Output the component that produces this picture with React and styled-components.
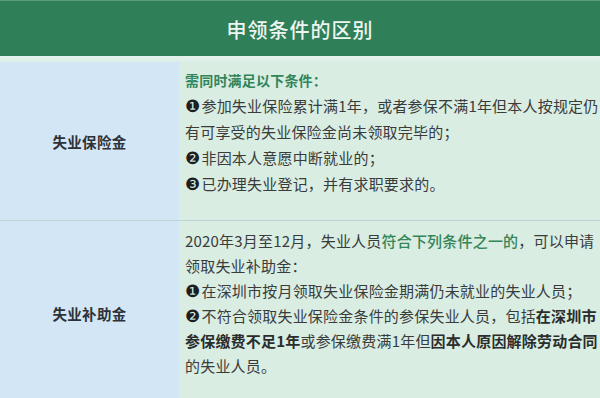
import React from "react";
import styled, { createGlobalStyle } from "styled-components";

const GlobalStyle = createGlobalStyle`
  html, body {
    margin: 0;
    padding: 0;
    background: #d9ede3;
  }
  body {
    font-family: "Noto Sans CJK SC", "Noto Sans", sans-serif;
  }
`;

const rows = [
  {
    label: "失业保险金",
    height: 158,
    pad: 5,
    lh: 26,
    lines: [
      [{ t: "需同时满足以下条件：", k: "head" }],
      [{ t: "❶", k: "num" }, { t: "参加失业保险累计满1年，或者参保不满1年但本人按规定仍" }],
      [{ t: "有可享受的失业保险金尚未领取完毕的；" }],
      [{ t: "❷", k: "num" }, { t: "非因本人意愿中断就业的；" }],
      [{ t: "❸", k: "num" }, { t: "已办理失业登记，并有求职要求的。" }],
    ],
  },
  {
    label: "失业补助金",
    height: 184,
    pad: 7,
    lh: 25,
    lines: [
      [
        { t: "2020年3月至12月，失业人员" },
        { t: "符合下列条件之一的", k: "green" },
        { t: "，可以申请" },
      ],
      [{ t: "领取失业补助金：" }],
      [{ t: "❶", k: "num" }, { t: "在深圳市按月领取失业保险金期满仍未就业的失业人员；" }],
      [
        { t: "❷", k: "num" },
        { t: "不符合领取失业保险金条件的参保失业人员，包括" },
        { t: "在深圳市", k: "bold" },
      ],
      [
        { t: "参保缴费不足1年", k: "bold" },
        { t: "或参保缴费满1年但" },
        { t: "因本人原因解除劳动合同", k: "bold" },
      ],
      [{ t: "的失业人员。" }],
    ],
  },
];

export default function App() {
  return (
    <Page>
      <GlobalStyle />
      <Header>
        <Title>申领条件的区别</Title>
      </Header>
      <Strip />
      {rows.map((row, i) => (
        <Row key={row.label} $height={row.height} $last={i === rows.length - 1}>
          <Label>{row.label}</Label>
          <Content $pad={row.pad} $lh={row.lh}>
            {row.lines.map((line, j) => (
              <Line key={j}>
                {line.map((seg, s) =>
                  seg.k ? (
                    <Seg key={s} $kind={seg.k}>
                      {seg.t}
                    </Seg>
                  ) : (
                    <React.Fragment key={s}>{seg.t}</React.Fragment>
                  )
                )}
              </Line>
            ))}
          </Content>
        </Row>
      ))}
    </Page>
  );
}

const Page = styled.div`
  width: 600px;
  height: 398px;
  overflow: hidden;
  display: flex;
  flex-direction: column;
  background: #d9ede3;
`;

const Header = styled.div`
  height: 56px;
  flex-shrink: 0;
  background: #2f7f58;
  border-top: 1px solid #5c9a7b;
  box-sizing: border-box;
  display: flex;
  align-items: center;
  justify-content: center;
`;

const Title = styled.h1`
  margin: 0;
  font-size: 20px;
  font-weight: 500;
  letter-spacing: 1px;
  color: #eef6f1;
  padding-top: 1px;
`;

const Strip = styled.div`
  height: 6px;
  flex-shrink: 0;
  background: linear-gradient(#e4f4ed, #dbeee6);
`;

const Row = styled.div`
  display: grid;
  grid-template-columns: 179px 1fr;
  height: ${(p) => p.$height}px;
  flex-shrink: 0;
  border-bottom: ${(p) => (p.$last ? "none" : "1px solid #bfd3d6")};
`;

const Label = styled.div`
  background: #d2e6f6;
  display: flex;
  align-items: center;
  justify-content: center;
  font-size: 14.5px;
  font-weight: 700;
  color: #2e3236;
  letter-spacing: 0.3px;
`;

const Content = styled.div`
  background: #d9ede3;
  padding: ${(p) => p.$pad}px 0 0 6px;
  font-size: 15px;
  line-height: ${(p) => p.$lh}px;
  letter-spacing: 0.2px;
  color: #3a3c3c;
  white-space: nowrap;
  overflow: hidden;
`;

const Line = styled.div``;

const Seg = styled.span`
  ${(p) =>
    p.$kind === "head" &&
    `
    color: #33855a;
    font-weight: 700;
    font-size: 14px;
  `}
  ${(p) =>
    p.$kind === "green" &&
    `
    color: #33855a;
    font-weight: 500;
  `}
  ${(p) =>
    p.$kind === "bold" &&
    `
    color: #2b2d2d;
    font-weight: 700;
  `}
  ${(p) =>
    p.$kind === "num" &&
    `
    display: inline-block;
    font-family: "DejaVu Sans", sans-serif;
    font-size: 17px;
    line-height: 1;
    color: #1e1e1e;
    margin-right: 1px;
  `}
`;
